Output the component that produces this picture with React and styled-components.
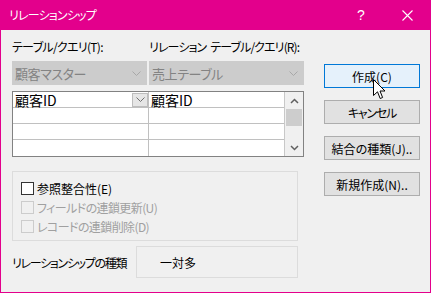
import styled, { createGlobalStyle } from "styled-components";

const GlobalStyle = createGlobalStyle`
  html, body {
    margin: 0;
    padding: 0;
    background: #f0f0f0;
  }
  body {
    font-family: "Noto Sans CJK JP", "Noto Sans", sans-serif;
    font-size: 12px;
    font-feature-settings: "palt";
    color: #000;
  }
`;

const Window = styled.div`
  position: relative;
  width: 431px;
  height: 293px;
  box-sizing: border-box;
  border: 1px solid #e3008c;
  border-top: none;
  background: #f0f0f0;
  display: flex;
  flex-direction: column;
  overflow: hidden;
`;

const TitleBar = styled.div`
  height: 30px;
  background: #e3008c;
  color: #fff;
  display: flex;
  align-items: center;
  flex-shrink: 0;
`;

const Title = styled.div`
  flex: 1;
  padding-left: 8px;
  font-size: 12px;
  line-height: 30px;
  letter-spacing: -0.8px;
`;

const TitleButton = styled.div`
  width: 46px;
  height: 30px;
  display: flex;
  align-items: center;
  justify-content: center;
  font-family: "Liberation Sans", sans-serif;
  font-size: 14px;
`;

const Body = styled.div`
  flex: 1;
  display: flex;
  padding: 9px 0 0 11px;
`;

const LeftColumn = styled.div`
  width: 292px;
  display: flex;
  flex-direction: column;
`;

const RightColumn = styled.div`
  margin-left: 20px;
  padding-top: 25px;
  display: flex;
  flex-direction: column;
  gap: 12px;
`;

const TwoCols = styled.div`
  display: grid;
  grid-template-columns: 137px 155px;
  margin-top: ${(p) => p.$top || 0}px;
`;

const Label = styled.div`
  line-height: 16px;
  height: 16px;
  white-space: nowrap;
  letter-spacing: ${(p) => p.$ls || 0}px;
`;

const Gap = styled.span`
  display: inline-block;
  width: 4px;
`;

const Combo = styled.div`
  height: 24px;
  width: ${(p) => p.$w}px;
  box-sizing: border-box;
  background: #cccccc;
  border: 1px solid #cccccc;
  color: #838383;
  font-size: 13px;
  letter-spacing: -0.4px;
  display: flex;
  align-items: center;
  justify-content: space-between;
  padding: 0 5px 0 2px;
`;

const Chevron = ({ color = "#a8a8a8" }) => (
  <svg width="9" height="5" viewBox="0 0 9 5">
    <polyline points="0.5,0.5 4.5,4.5 8.5,0.5" fill="none" stroke={color} strokeWidth="1" />
  </svg>
);

const Grid = styled.div`
  margin-top: 6px;
  height: 66px;
  box-sizing: border-box;
  border: 1px solid #828282;
  background: #fff;
  display: flex;
`;

const Table = styled.div`
  width: 271px;
  display: flex;
  flex-direction: column;
`;

const Row = styled.div`
  height: 16px;
  box-sizing: border-box;
  display: grid;
  grid-template-columns: 136px 135px;
  border-bottom: ${(p) => (p.$last ? "none" : "1px solid #c0c0c0")};
`;

const Cell = styled.div`
  box-sizing: border-box;
  border-right: ${(p) => (p.$divider ? "1px solid #c0c0c0" : "none")};
  display: flex;
  align-items: center;
  font-size: 14px;
  line-height: 14px;
  padding-left: 2px;
  font-feature-settings: normal;
  white-space: nowrap;
`;

const CellDrop = styled.div`
  margin-left: auto;
  width: 16px;
  height: 14px;
  box-sizing: border-box;
  background: #e6e6e6;
  border: 1px solid #bdbdbd;
  display: flex;
  align-items: center;
  justify-content: center;
`;

const ScrollBar = styled.div`
  width: 19px;
  box-sizing: border-box;
  border-left: 1px solid #c8c8c8;
  background: #f0f0f0;
  display: flex;
  flex-direction: column;
`;

const ScrollArrow = styled.div`
  height: 17px;
  display: flex;
  align-items: center;
  justify-content: center;
`;

const ScrollTrack = styled.div`
  flex: 1;
  padding: 0 1px;
`;

const Thumb = styled.div`
  height: 17px;
  background: #cdcdcd;
`;

const GroupBox = styled.div`
  margin-top: 14px;
  width: 286px;
  height: 70px;
  box-sizing: border-box;
  border: 1px solid #dcdcdc;
  padding: 7px 0 0 8px;
  display: flex;
  flex-direction: column;
`;

const CheckRow = styled.div`
  height: 19px;
  display: flex;
  align-items: center;
  gap: 3px;
  color: ${(p) => (p.$disabled ? "#a0a0a0" : "#000")};
  letter-spacing: ${(p) => (p.$disabled ? -0.6 : 0)}px;
  white-space: nowrap;
`;

const CheckBox = styled.div`
  width: 13px;
  height: 13px;
  box-sizing: border-box;
  border: 1px solid ${(p) => (p.$disabled ? "#cccccc" : "#333333")};
  background: ${(p) => (p.$disabled ? "#f0f0f0" : "#ffffff")};
`;

const TypeRow = styled.div`
  margin-top: 5px;
  display: flex;
  align-items: center;
`;

const TypeLabel = styled.div`
  width: 124px;
  white-space: nowrap;
  letter-spacing: -1.3px;
`;

const TypeBox = styled.div`
  width: 162px;
  height: 32px;
  box-sizing: border-box;
  border: 1px solid #dcdcdc;
  display: flex;
  align-items: center;
  padding-left: 23px;
`;

const Button = styled.div`
  width: 96px;
  height: 24px;
  box-sizing: border-box;
  border: 1px solid ${(p) => (p.$default ? "#0078d7" : "#adadad")};
  background: ${(p) => (p.$default ? "#e5f1fb" : "#e1e1e1")};
  display: flex;
  align-items: center;
  justify-content: center;
  white-space: nowrap;
  letter-spacing: ${(p) => p.$ls || 0}px;
`;

const Cursor = styled.svg`
  position: absolute;
  left: 372px;
  top: 79px;
`;

const CloseIcon = () => (
  <svg width="11" height="11" viewBox="0 0 11 11">
    <path d="M0.5 0.5 L10.5 10.5 M10.5 0.5 L0.5 10.5" stroke="#fff" strokeWidth="1.1" />
  </svg>
);

const ArrowUp = () => (
  <svg width="9" height="6" viewBox="0 0 9 6">
    <polyline points="1,5 4.5,1.5 8,5" fill="none" stroke="#606060" strokeWidth="1.5" />
  </svg>
);

const ArrowDown = () => (
  <svg width="9" height="6" viewBox="0 0 9 6">
    <polyline points="1,1 4.5,4.5 8,1" fill="none" stroke="#606060" strokeWidth="1.5" />
  </svg>
);

export default function App() {
  const emptyRows = [0, 1, 2];
  return (
    <>
      <GlobalStyle />
      <Window>
        <TitleBar>
          <Title>リレーションシップ</Title>
          <TitleButton>?</TitleButton>
          <TitleButton>
            <CloseIcon />
          </TitleButton>
        </TitleBar>
        <Body>
          <LeftColumn>
            <TwoCols>
              <Label $ls={-0.7}>テーブル/クエリ(T):</Label>
              <Label $ls={-0.9}>
                リレーション<Gap />テーブル/クエリ(R):
              </Label>
            </TwoCols>
            <TwoCols $top={6}>
              <Combo $w={135}>
                <span>顧客マスター</span>
                <Chevron />
              </Combo>
              <Combo $w={155}>
                <span>売上テーブル</span>
                <Chevron />
              </Combo>
            </TwoCols>
            <Grid>
              <Table>
                <Row>
                  <Cell $divider>
                    顧客ID
                    <CellDrop>
                      <Chevron color="#707070" />
                    </CellDrop>
                  </Cell>
                  <Cell>顧客ID</Cell>
                </Row>
                {emptyRows.map((i) => (
                  <Row key={i} $last={i === 2}>
                    <Cell $divider />
                    <Cell />
                  </Row>
                ))}
              </Table>
              <ScrollBar>
                <ScrollArrow>
                  <ArrowUp />
                </ScrollArrow>
                <ScrollTrack>
                  <Thumb />
                </ScrollTrack>
                <ScrollArrow>
                  <ArrowDown />
                </ScrollArrow>
              </ScrollBar>
            </Grid>
            <GroupBox>
              <CheckRow>
                <CheckBox />
                参照整合性(E)
              </CheckRow>
              <CheckRow $disabled>
                <CheckBox $disabled />
                フィールドの連鎖更新(U)
              </CheckRow>
              <CheckRow $disabled>
                <CheckBox $disabled />
                レコードの連鎖削除(D)
              </CheckRow>
            </GroupBox>
            <TypeRow>
              <TypeLabel>リレーションシップの種類</TypeLabel>
              <TypeBox>一対多</TypeBox>
            </TypeRow>
          </LeftColumn>
          <RightColumn>
            <Button $default>作成(C)</Button>
            <Button $ls={-1.2}>キャンセル</Button>
            <Button>結合の種類(J)..</Button>
            <Button>新規作成(N)..</Button>
          </RightColumn>
        </Body>
        <Cursor width="13" height="21" viewBox="0 0 13 21">
          <path
            d="M0.5 0.5 L0.5 16.5 L4.5 12.8 L7.2 19.5 L9.6 18.5 L7 12 L12 12 Z"
            fill="#fff"
            stroke="#000"
            strokeWidth="1"
            strokeLinejoin="miter"
          />
        </Cursor>
      </Window>
    </>
  );
}
